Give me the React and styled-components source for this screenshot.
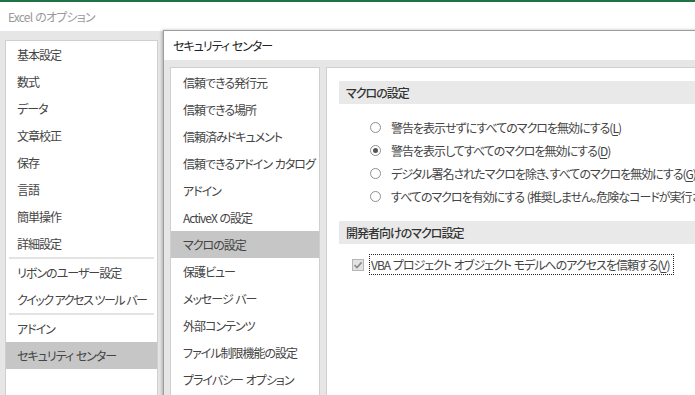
import React from "react";
import styled, { createGlobalStyle } from "styled-components";

const GlobalStyle = createGlobalStyle`
  html, body { margin: 0; padding: 0; overflow: hidden; }
  body {
    font-family: "Noto Sans CJK JP", "Noto Sans", sans-serif;
    font-size: 12px;
    font-feature-settings: "palt";
    letter-spacing: -1px;
    word-spacing: 1px;
    color: #444;
  }
`;

const Window = styled.div`
  position: relative;
  width: 695px;
  height: 395px;
  overflow: hidden;
  display: flex;
  flex-direction: column;
  background: #fff;
`;

const AccentBar = styled.div`
  height: 2px;
  background: #217346;
  flex: none;
`;

const TitleBar = styled.div`
  height: 29px;
  flex: none;
  display: flex;
  align-items: center;
  padding-left: 8px;
  color: #9a9a9a;
  font-size: 12px;
  letter-spacing: -0.8px;
  background: #fff;
`;

const Body = styled.div`
  flex: 1;
  background: #e6e6e6;
  padding: 9px 0 0 5px;
  display: flex;
  min-height: 0;
`;

const NavPanel = styled.div`
  width: ${(p) => p.$w}px;
  box-sizing: border-box;
  background: #fff;
  border: 1px solid #cfcfcf;
  border-bottom: none;
  padding-top: ${(p) => p.$pt || 0}px;
  display: flex;
  flex-direction: column;
  flex: none;
  overflow: hidden;
`;

const NavItem = styled.div`
  height: 27px;
  flex: none;
  display: flex;
  align-items: center;
  padding-left: ${(p) => p.$pl}px;
  white-space: nowrap;
  color: #444;
  letter-spacing: ${(p) => (p.$tight ? "-1.5px" : "-1px")};
  background: ${(p) => (p.$selected ? "#c6c6c6" : "transparent")};
`;

const Separator = styled.div`
  height: 2px;
  margin: 0 3px;
  background: #e3e3e3;
  flex: none;
`;

const Dialog = styled.div`
  position: absolute;
  left: 163px;
  top: 30px;
  right: -20px;
  bottom: -20px;
  border: 1px solid #9c9c9c;
  background: #e6e6e6;
  box-shadow: -1px 0 3px rgba(0, 0, 0, 0.25);
  display: flex;
  flex-direction: column;
`;

const DialogHeader = styled.div`
  height: 29px;
  flex: none;
  background: #fff;
  display: flex;
  align-items: center;
  padding-left: 9px;
  color: #222;
`;

const DialogBody = styled.div`
  flex: 1;
  display: flex;
  gap: 6px;
  padding: 7px 0 0 6px;
  min-height: 0;
`;

const Content = styled.div`
  flex: 1;
  background: #fff;
  border: 1px solid #cfcfcf;
  border-bottom: none;
  border-right: none;
  padding: 13px 0 0 12px;
  display: flex;
  flex-direction: column;
  min-width: 0;
`;

const SectionHeader = styled.div`
  height: 23px;
  flex: none;
  background: #e9e9e9;
  display: flex;
  align-items: center;
  padding-left: 7px;
  color: #333;
  font-weight: 500;
  margin-top: ${(p) => p.$mt || 0}px;
`;

const RadioList = styled.div`
  padding: 12px 0 0 31px;
  display: flex;
  flex-direction: column;
`;

const RadioRow = styled.div`
  height: 23px;
  display: flex;
  align-items: center;
  gap: 10px;
  white-space: nowrap;
  color: #444;
`;

const RadioCircle = styled.span`
  width: 11px;
  height: 11px;
  box-sizing: border-box;
  border: 1px solid #8f8f8f;
  border-radius: 50%;
  flex: none;
  display: flex;
  align-items: center;
  justify-content: center;
  &::after {
    content: "";
    display: ${(p) => (p.$checked ? "block" : "none")};
    width: 5px;
    height: 5px;
    border-radius: 50%;
    background: #555;
  }
`;

const U = styled.span`
  text-decoration: underline;
  text-underline-offset: 2px;
`;

const CheckRow = styled.div`
  margin: 10px 0 0 13px;
  display: flex;
  align-items: center;
  gap: 5px;
  white-space: nowrap;
`;

const CheckBox = styled.span`
  width: 12px;
  height: 12px;
  box-sizing: border-box;
  border: 1px solid #b5b5b5;
  background: #e3e3e3;
  flex: none;
  display: flex;
  align-items: center;
  justify-content: center;
`;

const FocusLabel = styled.span`
  height: 19px;
  display: flex;
  align-items: center;
  padding: 0 3px 0 1px;
  border: 1px dotted #222;
  color: #444;
`;

const outerItems = [
  "基本設定",
  "数式",
  "データ",
  "文章校正",
  "保存",
  "言語",
  "簡単操作",
  "詳細設定",
  "-",
  "リボンのユーザー設定",
  "クイック アクセス ツール バー",
  "-",
  "アドイン",
  "セキュリティ センター",
];

const trustItems = [
  "信頼できる発行元",
  "信頼できる場所",
  "信頼済みドキュメント",
  "信頼できるアドイン カタログ",
  "アドイン",
  "ActiveX の設定",
  "マクロの設定",
  "保護ビュー",
  "メッセージ バー",
  "外部コンテンツ",
  "ファイル制限機能の設定",
  "プライバシー オプション",
];

const radios = [
  { text: "警告を表示せずにすべてのマクロを無効にする", key: "L" },
  { text: "警告を表示してすべてのマクロを無効にする", key: "D", checked: true },
  { text: "デジタル署名されたマクロを除き、すべてのマクロを無効にする", key: "G" },
  {
    text: "すべてのマクロを有効にする (推奨しません。危険なコードが実行される可能性があります)",
    key: "E",
  },
];

export default function App() {
  return (
    <>
      <GlobalStyle />
      <Window>
        <AccentBar />
        <TitleBar>Excel のオプション</TitleBar>
        <Body>
          <NavPanel $w={153}>
            {outerItems.map((it, i) =>
              it === "-" ? (
                <Separator key={i} />
              ) : (
                <NavItem
                  key={i}
                  $pl={11}
                  $tight={it.length > 14}
                  $selected={it === "セキュリティ センター"}
                >
                  {it}
                </NavItem>
              )
            )}
          </NavPanel>
        </Body>
        <Dialog>
          <DialogHeader>セキュリティ センター</DialogHeader>
          <DialogBody>
            <NavPanel $w={150} $pt={1}>
              {trustItems.map((it) => (
                <NavItem key={it} $pl={12} $selected={it === "マクロの設定"}>
                  {it}
                </NavItem>
              ))}
            </NavPanel>
            <Content>
              <SectionHeader>マクロの設定</SectionHeader>
              <RadioList>
                {radios.map((r) => (
                  <RadioRow key={r.key}>
                    <RadioCircle $checked={r.checked} />
                    <span>
                      {r.text}(<U>{r.key}</U>)
                    </span>
                  </RadioRow>
                ))}
              </RadioList>
              <SectionHeader $mt={13}>開発者向けのマクロ設定</SectionHeader>
              <CheckRow>
                <CheckBox>
                  <svg width="10" height="10" viewBox="0 0 10 10">
                    <path d="M1.5 5.2 L4 7.6 L8.6 2.4" fill="none" stroke="#8a8a8a" strokeWidth="1.6" />
                  </svg>
                </CheckBox>
                <FocusLabel>
                  VBA プロジェクト オブジェクト モデルへのアクセスを信頼する(<U>V</U>)
                </FocusLabel>
              </CheckRow>
            </Content>
          </DialogBody>
        </Dialog>
      </Window>
    </>
  );
}
